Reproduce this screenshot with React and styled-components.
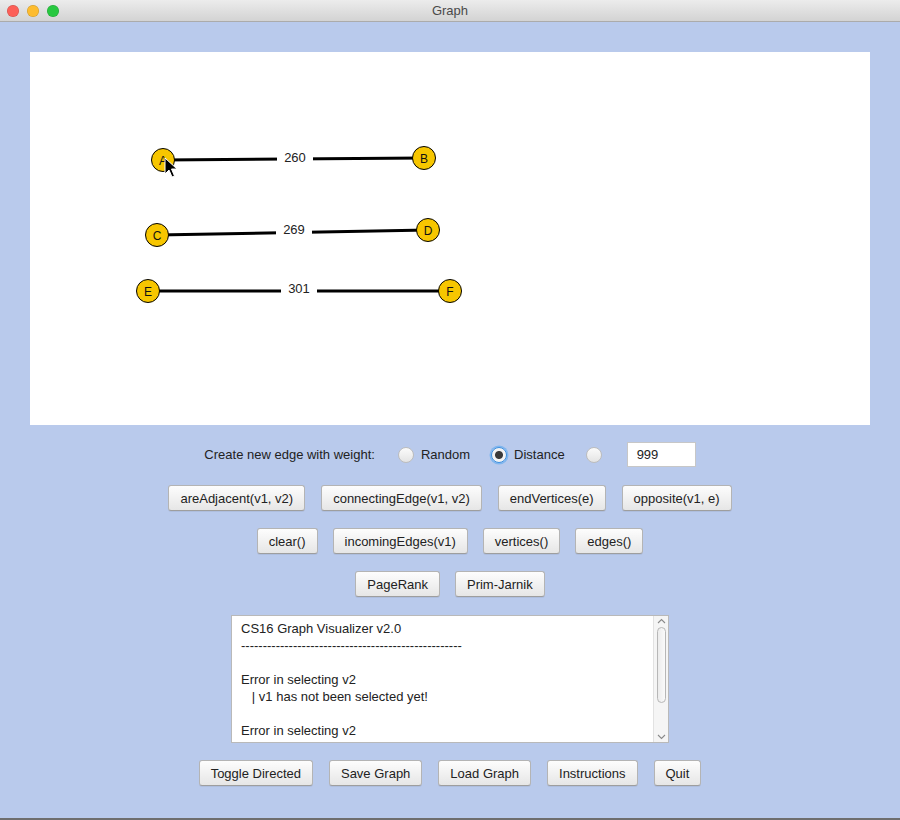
import React from 'react'
import styled, { createGlobalStyle } from 'styled-components'

const Global = createGlobalStyle`
	html, body {
		margin: 0;
		padding: 0;
		background: #6e6e6e;
	}
	body {
		font-family: "Liberation Sans", Arial, sans-serif;
		font-size: 13px;
		color: #222;
	}
`

const Window = styled.div`
	width: 900px;
	height: 818px;
	background: #b9caec;
	display: flex;
	flex-direction: column;
	align-items: center;
`

const TitleBar = styled.div`
	width: 100%;
	height: 22px;
	box-sizing: border-box;
	background: linear-gradient(#ececec, #d3d3d3);
	border-bottom: 1px solid #ababab;
	display: flex;
	align-items: center;
	justify-content: center;
	position: relative;
	color: #4a4a4a;
	font-size: 13px;
`

const Lights = styled.div`
	position: absolute;
	left: 7px;
	top: 5px;
	display: flex;
	gap: 8px;
`

const Light = styled.span`
	width: 12px;
	height: 12px;
	border-radius: 50%;
	background: ${p => p.color};
	box-shadow: inset 0 0 0 0.5px rgba(0, 0, 0, 0.2);
`

const Canvas = styled.div`
	width: 840px;
	height: 373px;
	margin-top: 30px;
	background: #fff;
	svg {
		display: block;
	}
`

const Row = styled.div`
	display: flex;
	align-items: center;
	justify-content: center;
	gap: ${p => p.gap ?? 16}px;
	margin-top: ${p => p.top}px;
`

const Label = styled.span`
	font-size: 13px;
	color: #222;
	margin-right: ${p => p.right || 0}px;
`

const RadioItem = styled.label`
	display: flex;
	align-items: center;
	gap: 7px;
	margin-right: ${p => p.right || 0}px;
`

const Radio = styled.span`
	width: 16px;
	height: 16px;
	box-sizing: border-box;
	border-radius: 50%;
	background: ${p => (p.checked ? 'radial-gradient(circle, #3a3a3a 0 3.5px, #f3f3f3 4.5px)' : 'linear-gradient(#fbfbfb, #e4e4e4)')};
	border: 1px solid ${p => (p.checked ? '#3b8fe0' : '#bdbdbd')};
	box-shadow: ${p => (p.checked ? '0 0 0 1.5px #7fb6ee' : 'none')};
`

const Field = styled.div`
	width: 69px;
	height: 25px;
	box-sizing: border-box;
	background: #fff;
	border: 1px solid #c7c7c7;
	padding: 0 9px;
	display: flex;
	align-items: center;
	margin-left: 6px;
`

const Button = styled.button`
	height: 26px;
	padding: 0 11px;
	font-family: "Liberation Sans", Arial, sans-serif;
	font-size: 13px;
	color: #222;
	background: linear-gradient(#fdfdfd, #e6e6e6);
	border: 1px solid #b4b4b4;
	border-bottom-color: #9e9e9e;
	border-radius: 3px;
	box-shadow: 0 1px 0 rgba(0, 0, 0, 0.06);
`

const Console = styled.div`
	width: 438px;
	height: 128px;
	box-sizing: border-box;
	margin-top: 18px;
	background: #fff;
	border: 1px solid #b9b9b9;
	display: flex;
	overflow: hidden;
`

const ConsoleText = styled.pre`
	flex: 1;
	margin: 0;
	padding: 4px 9px 0;
	font-family: "Liberation Sans", Arial, sans-serif;
	font-size: 13px;
	line-height: 17px;
	color: #222;
	white-space: pre;
	overflow: hidden;
`

const ScrollBar = styled.div`
	width: 15px;
	background: #f5f5f5;
	border-left: 1px solid #e2e2e2;
	display: flex;
	flex-direction: column;
	align-items: center;
	padding: 2px 0;
	box-sizing: border-box;
`

const Thumb = styled.div`
	width: 9px;
	height: 76px;
	margin: 3px 0 auto;
	box-sizing: border-box;
	border: 1px solid #b7b7b7;
	border-radius: 5px;
	background: linear-gradient(90deg, #ececec, #fafafa);
`

const Chevron = ({ up }) => (
	<svg width="9" height="6" viewBox="0 0 9 6">
		<path d={up ? 'M1 5 L4.5 1.5 L8 5' : 'M1 1 L4.5 4.5 L8 1'} fill="none" stroke="#8a8a8a" strokeWidth="1.1" />
	</svg>
)

const nodes = [
	{ id: 'A', x: 133, y: 108 },
	{ id: 'B', x: 394, y: 106 },
	{ id: 'C', x: 127, y: 183 },
	{ id: 'D', x: 398, y: 178 },
	{ id: 'E', x: 118, y: 239 },
	{ id: 'F', x: 420, y: 239 },
]

const edges = [
	{ a: 0, b: 1, w: 260, lx: 265, ly: 105 },
	{ a: 2, b: 3, w: 269, lx: 264, ly: 177 },
	{ a: 4, b: 5, w: 301, lx: 269, ly: 236 },
]

const Graph = () => (
	<svg width="840" height="373">
		{edges.map((e, i) => {
			const A = nodes[e.a]
			const B = nodes[e.b]
			return (
				<g key={i}>
					<line x1={A.x} y1={A.y} x2={B.x} y2={B.y} stroke="#000" strokeWidth="3" />
					<rect x={e.lx - 18} y={e.ly - 9} width="36" height="17" fill="#fff" />
					<text x={e.lx} y={e.ly + 5} textAnchor="middle" fontSize="13" fill="#222" fontFamily="Liberation Sans, Arial, sans-serif">{e.w}</text>
				</g>
			)
		})}
		{nodes.map(n => (
			<g key={n.id}>
				<circle cx={n.x} cy={n.y} r="11.5" fill="#f7c600" stroke="#000" strokeWidth="1" />
				<text x={n.x} y={n.y + 4.5} textAnchor="middle" fontSize="12" fill="#111" fontFamily="Liberation Sans, Arial, sans-serif">{n.id}</text>
			</g>
		))}
		<path d="M135 106 L135 122 L139 118 L142 125 L144.5 124 L141.5 117 L147 117 Z" fill="#000" stroke="#fff" strokeWidth="1" />
	</svg>
)

const consoleLines = [
	'CS16 Graph Visualizer v2.0',
	'-'.repeat(51),
	'',
	'Error in selecting v2',
	'   | v1 has not been selected yet!',
	'',
	'Error in selecting v2',
	'   | v1 has not been selected yet!',
]

export default function App() {
	return (
		<>
			<Global />
			<Window>
				<TitleBar>
					<Lights>
						<Light color="#fc5f57" />
						<Light color="#fdbc2e" />
						<Light color="#28c840" />
					</Lights>
					Graph
				</TitleBar>
				<Canvas>
					<Graph />
				</Canvas>
				<Row top={17} gap={0}>
					<Label right={23}>Create new edge with weight:</Label>
					<RadioItem right={21}>
						<Radio />
						Random
					</RadioItem>
					<RadioItem right={21}>
						<Radio checked />
						Distance
					</RadioItem>
					<RadioItem right={19}>
						<Radio />
					</RadioItem>
					<Field>999</Field>
				</Row>
				<Row top={18}>
					<Button>areAdjacent(v1, v2)</Button>
					<Button>connectingEdge(v1, v2)</Button>
					<Button>endVertices(e)</Button>
					<Button>opposite(v1, e)</Button>
				</Row>
				<Row top={17} gap={15}>
					<Button>clear()</Button>
					<Button>incomingEdges(v1)</Button>
					<Button>vertices()</Button>
					<Button>edges()</Button>
				</Row>
				<Row top={17} gap={15}>
					<Button>PageRank</Button>
					<Button>Prim-Jarnik</Button>
				</Row>
				<Console>
					<ConsoleText>{consoleLines.join('\n')}</ConsoleText>
					<ScrollBar>
						<Chevron up />
						<Thumb />
						<Chevron />
					</ScrollBar>
				</Console>
				<Row top={17}>
					<Button>Toggle Directed</Button>
					<Button>Save Graph</Button>
					<Button>Load Graph</Button>
					<Button>Instructions</Button>
					<Button>Quit</Button>
				</Row>
			</Window>
		</>
	)
}
